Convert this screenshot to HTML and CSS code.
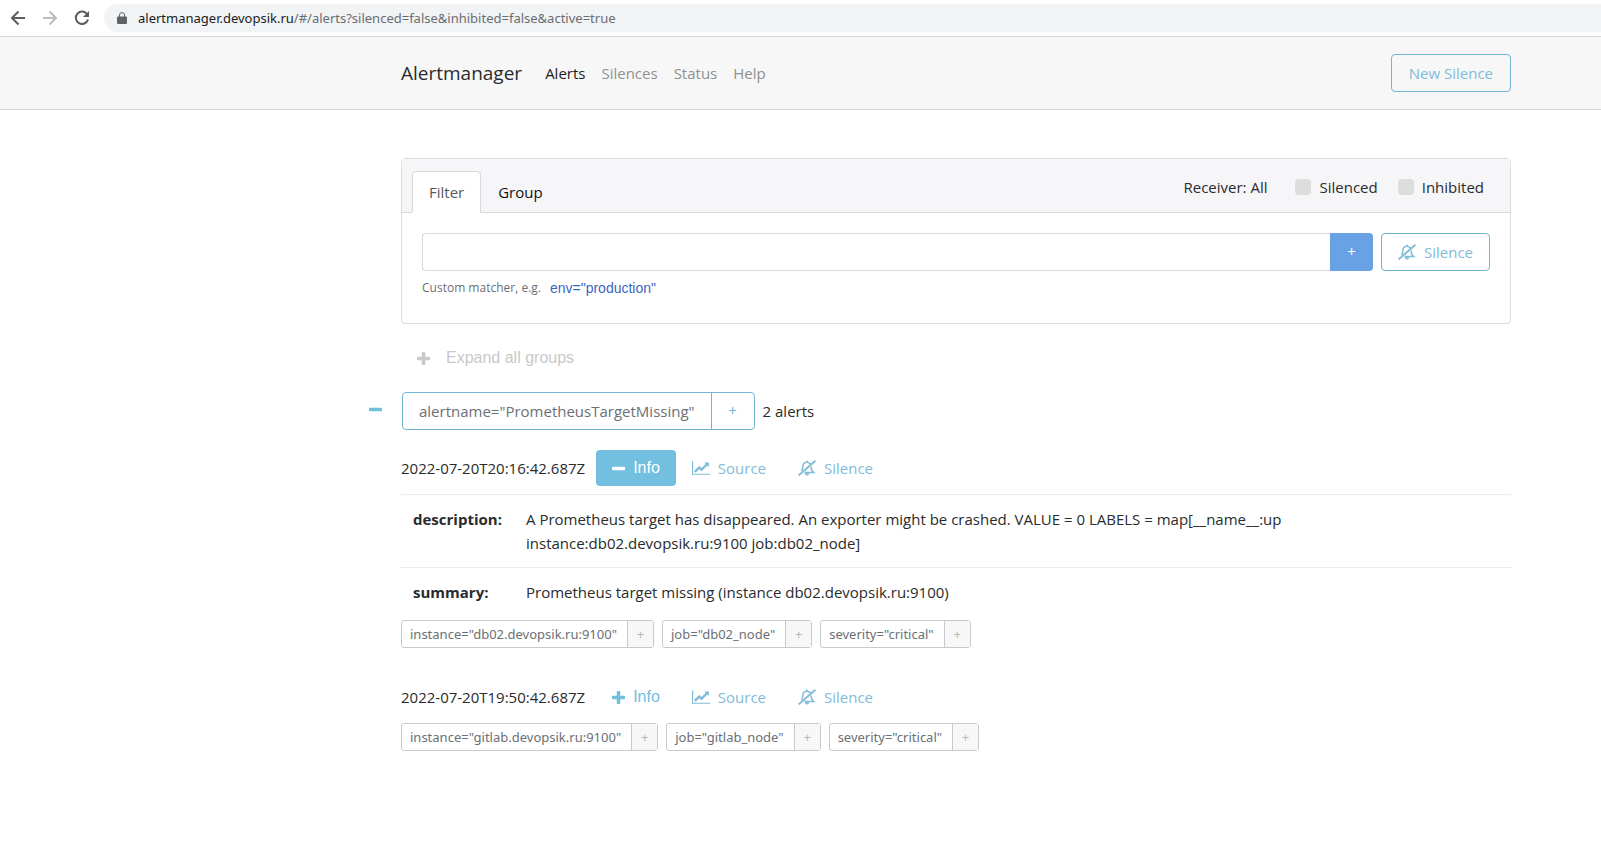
FILE: index.html
```html
<!DOCTYPE html>
<html lang="en">
<head>
<meta charset="utf-8">
<title>Alertmanager</title>
<link rel="stylesheet" href="styles.css">
</head>
<body>
<svg class="sprite" aria-hidden="true">
  <symbol id="plus" viewBox="192 128 1408 1408"><path d="M1600 736v192q0 40-28 68t-68 28h-416v416q0 40-28 68t-68 28h-192q-40 0-68-28t-28-68v-416h-416q-40 0-68-28t-28-68v-192q0-40 28-68t68-28h416v-416q0-40 28-68t68-28h192q40 0 68 28t28 68v416h416q40 0 68 28t28 68z"/></symbol>
  <symbol id="minus" viewBox="192 128 1408 1408"><path d="M1600 736v192q0 40-28 68t-68 28h-1216q-40 0-68-28t-28-68v-192q0-40 28-68t68-28h1216q40 0 68 28t28 68z"/></symbol>
  <symbol id="chart" viewBox="0 128 2048 1536"><path d="M2048 1536v128h-2048v-1536h128v1408h1920zm-128-1248v435q0 21-19.5 29.5t-35.5-7.5l-121-121-633 633q-10 10-23 10t-23-10l-233-233-416 416-192-192 585-585q10-10 23-10t23 10l233 233 464-464-121-121q-16-16-7.500-35.500t29.500-19.500h435q14 0 23 9t9 23z"/></symbol>
  <symbol id="bell" viewBox="0 0 18 16"><path fill="none" stroke="currentColor" stroke-width="1.500" d="M9 .6V2M3.400 11C4.600 9.400 4.900 8 4.900 6.200C4.900 3.800 6.500 2.200 9 2.200C10.800 2.200 12.100 3 12.700 4.300M13.100 6.500C13.200 9.200 14 11.200 15.800 12.600H6.300"/><path d="M6.800 13.200h4.400a2.200 2.400 0 0 1-4.400 0z"/><path fill="none" stroke="currentColor" stroke-width="1.900" d="M.6 15.400L17.400.8"/></symbol>
</svg>

<div class="browser">
  <button class="tool" aria-label="Back"><svg viewBox="0 0 16 16"><path d="M15 8H2M8.500 1.500L2 8l6.500 6.500"/></svg></button>
  <button class="tool dim" aria-label="Forward"><svg viewBox="0 0 16 16"><path d="M1 8h13M7.500 1.500L14 8l-6.500 6.500"/></svg></button>
  <button class="tool" aria-label="Reload"><svg viewBox="0 0 16 16"><path d="M13.300 4.500A6.200 6.200 0 1 0 14 9.500"/><path class="solid" d="M15 1v6H9z"/></svg></button>
  <div class="address">
    <svg class="lock" viewBox="0 0 10 12"><path d="M1 4.500h8q1 0 1 1V11q0 1-1 1H1q-1 0-1-1V5.500q0-1 1-1z"/><path class="shackle" d="M2.500 5V3a2.500 2.400 0 0 1 5 0v2"/></svg>
    <span>alertmanager.devopsik.ru<span class="path">/#/alerts?silenced=false&amp;inhibited=false&amp;active=true</span></span>
  </div>
</div>

<header class="navbar">
  <a class="brand" href="#">Alertmanager</a>
  <nav class="links">
    <a class="active" href="#">Alerts</a>
    <a href="#">Silences</a>
    <a href="#">Status</a>
    <a href="#">Help</a>
  </nav>
  <a class="btn outline" href="#">New Silence</a>
</header>

<main class="container">
  <section class="card">
    <div class="card-head">
      <div class="tabs">
        <a class="tab selected" href="#">Filter</a>
        <a class="tab" href="#">Group</a>
      </div>
      <div class="options">
        <span class="receiver">Receiver: All</span>
        <label class="check"><input type="checkbox">Silenced</label>
        <label class="check"><input type="checkbox">Inhibited</label>
      </div>
    </div>
    <div class="card-body">
      <div class="filter">
        <div class="group">
          <input class="matcher" type="text" aria-label="Custom matcher">
          <button class="add">+</button>
        </div>
        <a class="btn outline" href="#"><svg class="bell"><use href="#bell"/></svg>Silence</a>
      </div>
      <p class="hint">Custom matcher, e.g.<button class="example">env="production"</button></p>
    </div>
  </section>

  <button class="expand"><svg class="mark"><use href="#plus"/></svg>Expand all groups</button>

  <div class="alert-group">
    <button class="collapse" aria-label="Collapse group"><svg class="mark"><use href="#minus"/></svg></button>
    <div class="pair"><span class="pair-name">alertname="PrometheusTargetMissing"</span><button class="pair-add">+</button></div>
    <span>2 alerts</span>
  </div>

  <article class="alert">
    <div class="alert-head">
      <time>2022-07-20T20:16:42.687Z</time>
      <button class="btn info on"><svg class="mark"><use href="#minus"/></svg>Info</button>
      <a class="btn source" href="#"><svg class="chart"><use href="#chart"/></svg>Source</a>
      <a class="btn" href="#"><svg class="bell"><use href="#bell"/></svg>Silence</a>
    </div>
    <table class="notes">
      <tr><th scope="row">description:</th><td>A Prometheus target has disappeared. An exporter might be crashed. VALUE = 0 LABELS = map[__name__:up<br>instance:db02.devopsik.ru:9100 job:db02_node]</td></tr>
      <tr><th scope="row">summary:</th><td>Prometheus target missing (instance db02.devopsik.ru:9100)</td></tr>
    </table>
    <div class="labels">
      <div class="label"><span>instance="db02.devopsik.ru:9100"</span><button>+</button></div>
      <div class="label"><span>job="db02_node"</span><button>+</button></div>
      <div class="label"><span>severity="critical"</span><button>+</button></div>
    </div>
  </article>

  <article class="alert">
    <div class="alert-head">
      <time>2022-07-20T19:50:42.687Z</time>
      <button class="btn info"><svg class="mark"><use href="#plus"/></svg>Info</button>
      <a class="btn source" href="#"><svg class="chart"><use href="#chart"/></svg>Source</a>
      <a class="btn" href="#"><svg class="bell"><use href="#bell"/></svg>Silence</a>
    </div>
    <div class="labels">
      <div class="label"><span>instance="gitlab.devopsik.ru:9100"</span><button>+</button></div>
      <div class="label"><span>job="gitlab_node"</span><button>+</button></div>
      <div class="label"><span>severity="critical"</span><button>+</button></div>
    </div>
  </article>
</main>
</body>
</html>
```
FILE: styles.css
```css
* { box-sizing: border-box; }

body {
  margin: 0;
  background: #fff;
  color: #292b2c;
  font: 15px/24px "Open Sans", "Noto Sans", sans-serif;
}

a { color: inherit; text-decoration: none; }
button { margin: 0; padding: 0; border: 0; background: none; color: inherit; font: inherit; cursor: pointer; }
svg { flex: none; fill: currentColor; }
.sprite { position: absolute; width: 0; height: 0; }

.browser {
  display: flex;
  align-items: center;
  height: 37px;
  padding-left: 10px;
  border-bottom: 1px solid #d5d6d7;
}
.tool { display: flex; margin-right: 16px; color: #5a5d61; }
.tool.dim { color: #babcbe; }
.tool svg { width: 16px; height: 16px; fill: none; stroke: currentColor; stroke-width: 2; }
.tool .solid { fill: currentColor; stroke: none; }
.address {
  display: flex;
  flex: 1;
  align-items: center;
  gap: 11px;
  height: 28px;
  margin-left: -2px;
  padding-left: 13px;
  border-radius: 14px 0 0 14px;
  background: #f1f3f4;
  color: #202124;
  font-family: "Noto Sans", sans-serif;
  font-size: 13px;
}
.path { color: #6a6e73; }
.lock { width: 10px; height: 12px; color: #5f6368; overflow: visible; }
.shackle { fill: none; stroke: currentColor; stroke-width: 1; }

.navbar {
  display: flex;
  align-items: center;
  padding: 17px 90px 17px 401px;
  border-bottom: 1px solid #d5d6d7;
  background: #f7f7f7;
}
.brand { margin-right: 23px; font-size: 19px; }
.links { display: flex; flex: 1; gap: 16px; color: #909090; }
.links .active { color: #1c1c1c; }

.btn { display: flex; align-items: center; gap: 8px; padding: 6px 16px; border: 1px solid transparent; border-radius: 4px; color: #82bbd8; }
.outline { border-color: #72b6d6; }
.navbar .outline { padding: 6px 17px; }
.bell { width: 18px; height: 16px; }
.chart { width: 18px; height: 14px; }
.mark { width: 13px; height: 13px; }

.container { padding: 48px 90px 0 401px; }

.card { border: 1px solid #dcdddd; border-radius: 4px; }
.card-head {
  display: flex;
  align-items: flex-end;
  justify-content: space-between;
  padding: 12px 26px 0 10px;
  border-bottom: 1px solid #d8d9da;
  background: #f6f6f9;
}
.tabs { display: flex; margin-bottom: -1px; }
.tab { padding: 8px 16px; border: 1px solid transparent; color: #111; }
.tab.selected { border-color: #d8d9da; border-bottom-color: #fff; border-radius: 4px 4px 0 0; background: #fff; color: #55595c; }
.options { display: flex; margin-bottom: 13px; }
.receiver { margin-right: 28px; }
.check { display: flex; align-items: center; gap: 8px; }
.check + .check { margin-left: 20px; }
.check input { appearance: none; width: 16px; height: 16px; margin: 0; border-radius: 4px; background: #ddd; }

.card-body { padding: 20px 20px 23px; }
.filter { display: flex; gap: 8px; }
.group { display: flex; flex: 1; }
.matcher { flex: 1; min-width: 0; height: 38px; border: 1px solid #d8d9da; border-right: 0; border-radius: 4px 0 0 4px; background: #fff; font: inherit; }
.add { width: 43px; padding-bottom: 2px; border-radius: 0 4px 4px 0; background: #68a2e4; color: #fff; }
.hint { display: flex; gap: 9px; margin: 5px 0 0; color: #6b7075; font-size: 12px; }
.example { color: #3d66c4; font: 14px/24px "Liberation Sans", sans-serif; }

.expand { display: flex; align-items: center; gap: 16px; margin: 22px 0 0 16px; color: #c8c9ca; font: 16px/24px "Liberation Sans", sans-serif; }

.alert-group { display: flex; align-items: center; gap: 8px; margin: 22px 0 19px -32px; }
.collapse { display: flex; width: 25px; padding-bottom: 4px; color: #72bedd; }
.pair { display: flex; height: 38px; border: 1px solid #72b6d6; border-radius: 4px; }
.pair-name { padding: 6px 16px; color: #6b7075; }
.pair-add { width: 43px; padding-bottom: 2px; border-left: 1px solid #72b6d6; color: #72b6d6; }

.alert { margin-bottom: 30px; }
.alert-head { display: flex; align-items: center; margin-bottom: 7px; }
.alert-head time { margin-right: 11px; }
.alert-head .btn { padding: 6px 15px; }
.alert-head .info { height: 36px; color: #72bedd; font: 16px/24px "Liberation Sans", sans-serif; }
.alert-head .info.on { background: #72bfdf; color: #fff; }

.notes { width: 100%; margin-bottom: 4px; border-collapse: collapse; }
.notes th, .notes td { padding: 12px; border-top: 1px solid #ececee; text-align: left; vertical-align: top; }
.notes th { width: 113px; }

.labels { display: flex; gap: 8px; }
.label { display: flex; height: 28px; border: 1px solid #c8c9ca; border-radius: 3px; color: #6b7075; font: 13px/26px "Noto Sans", sans-serif; }
.label span { padding: 0 10px 0 8px; }
.label button { width: 26px; padding-bottom: 2px; border-left: 1px solid #c8c9ca; background: #f7f7f7; color: #b8b9ba; }
```
